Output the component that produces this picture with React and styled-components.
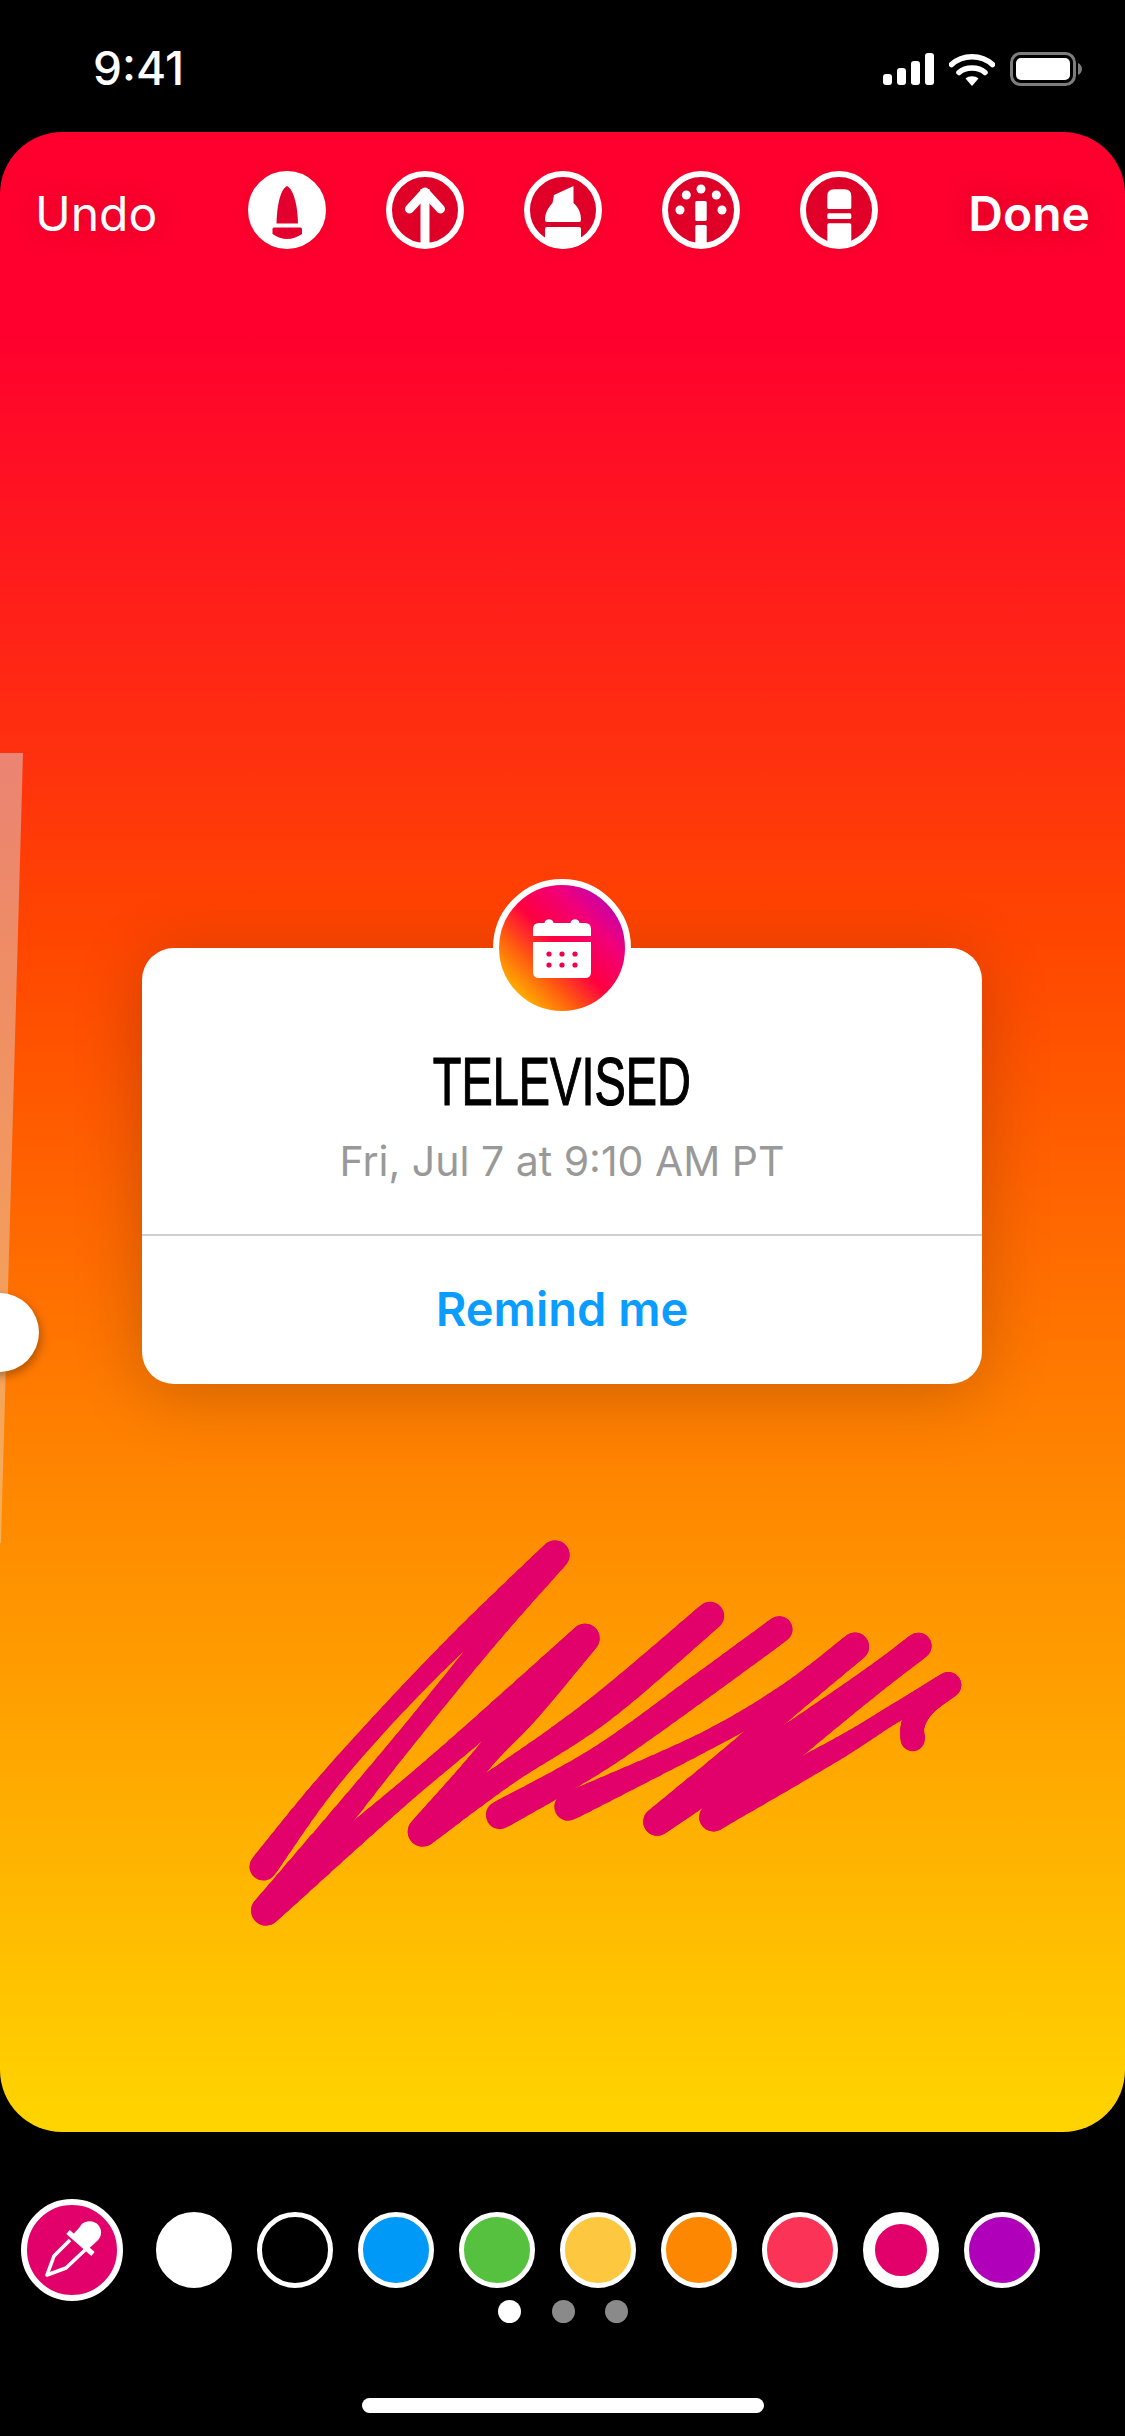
import React from 'react';
import styled, { createGlobalStyle } from 'styled-components';

const GlobalStyle = createGlobalStyle`
  html, body {
    margin: 0;
    padding: 0;
    background: #000;
  }
`;

const Phone = styled.div`
  width: 1125px;
  height: 2436px;
  background: #000;
  display: flex;
  flex-direction: column;
  overflow: hidden;
  font-family: Inter, "Liberation Sans", sans-serif;
  color: #fff;
`;

const StatusBar = styled.div`
  height: 132px;
  flex: none;
  display: flex;
  justify-content: space-between;
  align-items: flex-start;
  padding: 42px 43px 0 93px;
  box-sizing: border-box;
`;

const Clock = styled.div`
  font-size: 46px;
  line-height: 52px;
  font-weight: 500;
`;

const StatusIcons = styled.div`
  display: flex;
  align-items: center;
  gap: 15px;
  margin-top: 10px;
`;

const Canvas = styled.div`
  position: relative;
  height: 2000px;
  flex: none;
  border-radius: 62px;
  overflow: hidden;
  background: linear-gradient(180deg, #ff002e 0%, #ff002e 10%, #ff4500 40%, #ff8c00 70%, #ffd500 100%);
`;

const Toolbar = styled.div`
  display: grid;
  grid-template-columns: 1fr auto 1fr;
  align-items: center;
  padding: 39px 35px 0 35px;
`;

const TextAction = styled.div`
  font-size: 48px;
  line-height: 60px;
  margin-top: 8px;
  font-weight: ${(p) => (p.$bold ? 600 : 400)};
  text-align: ${(p) => (p.$bold ? 'right' : 'left')};
  text-shadow: 0 0 30px rgba(0, 0, 0, 0.25);
`;

const Tools = styled.div`
  display: flex;
  gap: 60px;
`;

const ToolIcon = styled.svg`
  width: 78px;
  height: 78px;
  display: block;
  filter: drop-shadow(0 0 8px rgba(0, 0, 0, 0.08));
`;

const SliderTrack = styled.div`
  position: absolute;
  left: 0;
  top: 621px;
  width: 23px;
  height: 790px;
  clip-path: polygon(0 0, 100% 0, 4% 100%, 0 100%);
  background: linear-gradient(180deg, rgba(215, 215, 215, 0.5), rgba(235, 235, 235, 0.36));
`;

const SliderKnob = styled.div`
  position: absolute;
  left: -40px;
  top: 1161px;
  width: 79px;
  height: 79px;
  border-radius: 50%;
  background: #fff;
  box-shadow: 2px 4px 10px rgba(0, 0, 0, 0.3);
`;

const Sticker = styled.div`
  position: absolute;
  left: 142px;
  top: 816px;
  width: 840px;
  height: 436px;
  background: #fff;
  border-radius: 32px;
  box-shadow: 0 10px 70px rgba(0, 0, 0, 0.2);
  display: flex;
  flex-direction: column;
`;

const Badge = styled.div`
  position: absolute;
  left: 351px;
  top: -69px;
  width: 126px;
  height: 126px;
  border: 6px solid #fff;
  border-radius: 50%;
  background: linear-gradient(45deg, #ffae00 14%, #ff5a10 32%, #ff0040 50%, #f0007a 72%, #a800c8 98%);
  display: flex;
  align-items: center;
  justify-content: center;
`;

const StickerBody = styled.div`
  height: 288px;
  flex: none;
  box-sizing: border-box;
  padding-top: 96px;
  display: flex;
  flex-direction: column;
  align-items: center;
  border-bottom: 2px solid #d0d0d0;
`;

const Title = styled.div`
  font-family: "Liberation Sans", Arial, sans-serif;
  font-size: 69px;
  line-height: 76px;
  color: #000;
  -webkit-text-stroke: 1.2px #000;
  transform: scaleX(0.68);
  white-space: nowrap;
`;

const DateLine = styled.div`
  font-size: 41px;
  line-height: 48px;
  color: #999;
  margin-top: 17px;
`;

const RemindButton = styled.div`
  flex: 1;
  display: flex;
  align-items: center;
  justify-content: center;
  color: #0a9dff;
  font-size: 47px;
  font-weight: 600;
  padding-bottom: 3px;
`;

const Scribble = styled.svg`
  position: absolute;
  left: 0;
  top: 0;
  width: 1125px;
  height: 2000px;
`;

const Palette = styled.div`
  height: 102px;
  flex: none;
  margin-top: 67px;
  padding-left: 21px;
  display: flex;
  align-items: center;
`;

const Dropper = styled.div`
  width: 102px;
  height: 102px;
  box-sizing: border-box;
  border: 6px solid #fff;
  border-radius: 50%;
  background: #e2006a;
  margin-right: 33px;
  flex: none;
  position: relative;
`;

const DropperIcon = styled.svg`
  position: absolute;
  left: -6px;
  top: -6px;
  width: 102px;
  height: 102px;
`;

const Swatches = styled.div`
  display: flex;
  gap: 25px;
`;

const Swatch = styled.div`
  width: 76px;
  height: 76px;
  box-sizing: border-box;
  border-radius: 50%;
  border: ${(p) => (p.$selected ? 12 : 5)}px solid #fff;
  background: ${(p) => p.$color};
`;

const Pager = styled.div`
  display: flex;
  justify-content: center;
  gap: 30.5px;
  padding-left: 1px;
  margin-top: -1px;
  height: 23px;
  flex: none;
`;

const PagerDot = styled.div`
  width: 23px;
  height: 23px;
  border-radius: 50%;
  background: ${(p) => (p.$active ? '#fff' : '#8a8a8a')};
`;

const HomeBar = styled.div`
  width: 402px;
  height: 15px;
  border-radius: 8px;
  background: #fff;
  margin: 75px 0 0 362px;
  flex: none;
`;

const swatchColors = ['#fff', '#000', '#0099f7', '#55c13e', '#fdc73f', '#fd8700', '#fb3457', '#e2006a', '#b000ba'];

// knots of the pen stroke: x, y, width, read off two crops at 3x
const a = (x, y, w) => [240 + x / 3, 1530 + y / 3, w / 3];
const b = (x, y, w) => [600 + x / 3, 1590 + y / 3, w / 3];

const scribbleLegs = [
  [a(70, 1010, 84), a(290, 725, 60), a(620, 371, 60), a(945, 75, 88)],
  [a(945, 75, 88), a(738, 330, 62), a(437, 700, 62), a(78, 1142, 90)],
  [a(78, 1142, 90), a(430, 841, 66), a(650, 654, 66), a(1035, 325, 88)],
  [a(1035, 325, 88), a(863, 530, 90), a(725, 690, 70), a(548, 905, 90)],
  [a(548, 905, 90), a(800, 730, 72), a(1080, 538, 88), b(330, 78, 85)],
  [a(780, 855, 85), b(0, 505, 76), b(300, 292, 80), b(538, 118, 80)],
  [a(985, 830, 85), b(300, 462, 58), b(560, 315, 66), b(765, 170, 85)],
  [b(765, 170, 85), b(500, 408, 64), b(172, 695, 85)],
  [b(172, 695, 85), b(420, 535, 70), b(800, 272, 62), b(955, 168, 80)],
  [b(955, 168, 80), b(800, 300, 62), b(540, 515, 62), b(340, 682, 85)],
  [b(340, 682, 85), b(700, 484, 64), b(900, 361, 56), b(1045, 285, 78)],
  [b(1045, 285, 78), b(975, 345, 68), b(940, 400, 70), b(938, 448, 72)],
];

// catmull-rom through the knots, cut into short round segments so the width can change
const sampleLeg = (knots) => {
  const out = [];
  for (let i = 0; i < knots.length - 1; i++) {
    const p0 = knots[Math.max(i - 1, 0)];
    const p1 = knots[i];
    const p2 = knots[i + 1];
    const p3 = knots[Math.min(i + 2, knots.length - 1)];
    for (let s = 0; s < 12; s++) {
      const t = s / 12;
      out.push(p1.map((_, k) => 0.5 * (2 * p1[k] + (p2[k] - p0[k]) * t
        + (2 * p0[k] - 5 * p1[k] + 4 * p2[k] - p3[k]) * t * t
        + (3 * p1[k] - p0[k] - 3 * p2[k] + p3[k]) * t * t * t)));
    }
  }
  out.push(knots[knots.length - 1]);
  return out;
};

const scribbleSegments = scribbleLegs.flatMap((leg) => {
  const pts = sampleLeg(leg);
  return pts.slice(1).map((p, i) => [pts[i], p]);
});

const red = '#e4002e';

function ToolRing({ filled, children }) {
  return (
    <ToolIcon viewBox="0 0 78 78">
      <circle cx="39" cy="39" r="36" fill={filled ? '#fff' : 'rgba(0,0,0,0.1)'} stroke="#fff" strokeWidth="6" />
      {children}
    </ToolIcon>
  );
}

export default function App() {
  return (
    <Phone>
      <GlobalStyle />
      <StatusBar>
        <Clock>9:41</Clock>
        <StatusIcons>
          <svg width="51" height="32" viewBox="0 0 51 32">
            <rect x="0" y="21" width="9" height="11" rx="3" fill="#fff" />
            <rect x="14" y="15" width="9" height="17" rx="3" fill="#fff" />
            <rect x="28" y="8" width="9" height="24" rx="3" fill="#fff" />
            <rect x="42" y="0" width="9" height="32" rx="3" fill="#fff" />
          </svg>
          <svg width="46" height="33" viewBox="0 0 46 33">
            <path d="M2.5 11.5C13.5 1 32.5 1 43.5 11.5" fill="none" stroke="#fff" strokeWidth="5.5" strokeLinecap="round" />
            <path d="M10 19.5C16.5 13.5 29.5 13.5 36 19.5" fill="none" stroke="#fff" strokeWidth="5.5" strokeLinecap="round" />
            <path d="M16.5 25.5C20 22.5 26 22.5 29.5 25.5L23 33Z" fill="#fff" />
          </svg>
          <svg width="72" height="34" viewBox="0 0 72 34">
            <rect x="1.5" y="1.5" width="63" height="31" rx="9" fill="none" stroke="#7d7d7d" strokeWidth="3" />
            <rect x="6" y="6" width="54" height="22" rx="5" fill="#fff" />
            <path d="M68 11C70.5 12 72 14.5 72 17C72 19.5 70.5 22 68 23Z" fill="#7d7d7d" />
          </svg>
        </StatusIcons>
      </StatusBar>

      <Canvas>
        <Toolbar>
          <TextAction>Undo</TextAction>
          <Tools>
            <ToolRing filled>
              <path d="M39 15C33 18 29 32 28.5 52.5H50C49.5 32 45 18 39 15Z" fill={red} />
              <path d="M24.5 58Q24.5 56.5 26 56.5H52.5Q54 56.5 54 58V63Q39 73 24.5 63Z" fill={red} />
            </ToolRing>
            <ToolRing>
              <path d="M39 18V75" stroke="#fff" strokeWidth="9" fill="none" />
              <path d="M23.5 38L39 21L54.5 38" stroke="#fff" strokeWidth="9" strokeLinecap="round" strokeLinejoin="round" fill="none" />
            </ToolRing>
            <ToolRing>
              <path d="M49.5 15L49.5 32C54 36 57 41 57 49Q57 51 55 51H23Q21 51 21 49C21 41 25 36 28.5 32L30 24Z" fill="#fff" />
              <path d="M21 58Q21 56 23 56H55Q57 56 57 58V73A39 39 0 0 1 21 73Z" fill="#fff" />
            </ToolRing>
            <ToolRing>
              <circle cx="18" cy="39" r="4.5" fill="#fff" />
              <circle cx="24.3" cy="24" r="4.5" fill="#fff" />
              <circle cx="39" cy="18" r="4.5" fill="#fff" />
              <circle cx="54.3" cy="24" r="4.5" fill="#fff" />
              <circle cx="60" cy="39" r="4.5" fill="#fff" />
              <rect x="33.3" y="30" width="11.4" height="20" rx="1.5" fill="#fff" />
              <path d="M33.3 55.5Q33.3 54 34.8 54H43.2Q44.7 54 44.7 55.5V77H33.3Z" fill="#fff" />
            </ToolRing>
            <ToolRing>
              <path d="M27.3 25Q27.3 18.3 34 18.3H44.6Q51.3 18.3 51.3 25V36.5Q51.3 38 49.8 38H28.8Q27.3 38 27.3 36.5Z" fill="#fff" />
              <rect x="27.3" y="42.3" width="24" height="5.8" rx="1.5" fill="#fff" />
              <path d="M27.3 54Q27.3 52.3 29 52.3H49.6Q51.3 52.3 51.3 54V75A39 39 0 0 1 27.3 75Z" fill="#fff" />
            </ToolRing>
          </Tools>
          <TextAction $bold>Done</TextAction>
        </Toolbar>

        <SliderTrack />
        <SliderKnob />

        <Sticker>
          <Badge>
            <svg width="58" height="59" viewBox="0 0 58 59">
              <path d="M0 17V10Q0 4 6 4H11.5C12 -1 20 -1 20.5 4H37.5C38 -1 46 -1 46.5 4H52Q58 4 58 10V17Z" fill="#fff" />
              <path d="M0 23H58V53Q58 59 52 59H6Q0 59 0 53Z" fill="#fff" />
              {[16, 29, 42].map((x) => (
                <g key={x} fill="#f2004a">
                  <circle cx={x} cy="35" r="2.6" />
                  <circle cx={x} cy="46" r="2.6" />
                </g>
              ))}
            </svg>
          </Badge>
          <StickerBody>
            <Title>TELEVISED</Title>
            <DateLine>Fri, Jul 7 at 9:10 AM PT</DateLine>
          </StickerBody>
          <RemindButton>Remind me</RemindButton>
        </Sticker>

        <Scribble viewBox="0 132 1125 2000">
          <g stroke="#e2006a" strokeLinecap="round" fill="none">
            {scribbleSegments.map(([p, q], i) => (
              <line key={i} x1={p[0]} y1={p[1]} x2={q[0]} y2={q[1]} strokeWidth={(p[2] + q[2]) / 2} />
            ))}
          </g>
        </Scribble>
      </Canvas>

      <Palette>
        <Dropper>
          <DropperIcon viewBox="0 0 102 102">
            <path d="M49 41L33 57L26 76L45 69L64 51" fill="none" stroke="#fff" strokeWidth="3.6" strokeLinejoin="round" />
            <path d="M47 33L72 55" stroke="#fff" strokeWidth="5" fill="none" />
            <path d="M52 37C52 34 58 30 60 26C64 21 74 21 78 27C82 33 80 39 75 43C72 46 69 49 66 50Z" fill="#fff" />
          </DropperIcon>
        </Dropper>
        <Swatches>
          {swatchColors.map((c) => (
            <Swatch key={c} $color={c} $selected={c === '#e2006a'} />
          ))}
        </Swatches>
      </Palette>
      <Pager>
        <PagerDot $active />
        <PagerDot />
        <PagerDot />
      </Pager>
      <HomeBar />
    </Phone>
  );
}
